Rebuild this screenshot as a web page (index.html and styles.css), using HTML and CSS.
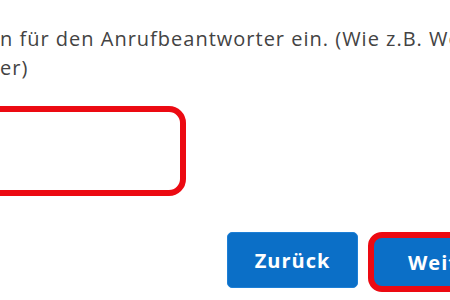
FILE: index.html
```html
<!DOCTYPE html>
<html lang="de">
<head>
<meta charset="utf-8">
<link rel="stylesheet" href="styles.css">
</head>
<body>
<div class="page">
  <p class="hint">
    <span class="line">n für den Anrufbeantworter ein. (Wie z.B. Wohnung</span>
    <span class="line">er)</span>
  </p>
  <div class="field">
    <input class="name-input" type="text" aria-label="Name">
  </div>
  <div class="actions">
    <button class="btn" type="button">Zurück</button>
    <button class="btn btn-next" type="button">Weiter</button>
  </div>
</div>
</body>
</html>
```

FILE: styles.css
```css
html, body {
  margin: 0;
  padding: 0;
  background: #ffffff;
  width: 450px;
  height: 300px;
  overflow: hidden;
}

.page {
  font-family: "Open Sans", "Noto Sans", sans-serif;
  color: #434343;
  padding-top: 24px;
}

.hint {
  margin: 0;
  font-size: 20px;
  line-height: 29px;
  letter-spacing: 1px;
}

.line {
  display: block;
  white-space: nowrap;
}

.field {
  margin-top: 24px;
  margin-left: -40px;
}

.name-input {
  box-sizing: border-box;
  display: block;
  width: 226px;
  height: 90px;
  border: 6px solid #ec0a12;
  border-radius: 17px;
  background: #fff;
  outline: none;
  font: inherit;
}

.actions {
  display: flex;
  gap: 10px;
  margin-top: 36px;
  margin-left: 227px;
  align-items: flex-start;
}

.btn {
  flex: none;
  box-sizing: border-box;
  width: 131px;
  height: 56px;
  border: 1px solid #1d7fd6;
  border-radius: 5px;
  background: #0b6fc7;
  color: #ffffff;
  font-family: "Open Sans", "Noto Sans", sans-serif;
  font-weight: 700;
  font-size: 20px;
  letter-spacing: 1px;
  padding: 0;
  cursor: pointer;
}

.btn-next {
  width: 140px;
  height: 60px;
  border: 6px solid #ec0a12;
  border-radius: 14px;
  text-align: left;
  padding-left: 34px;
}
```
